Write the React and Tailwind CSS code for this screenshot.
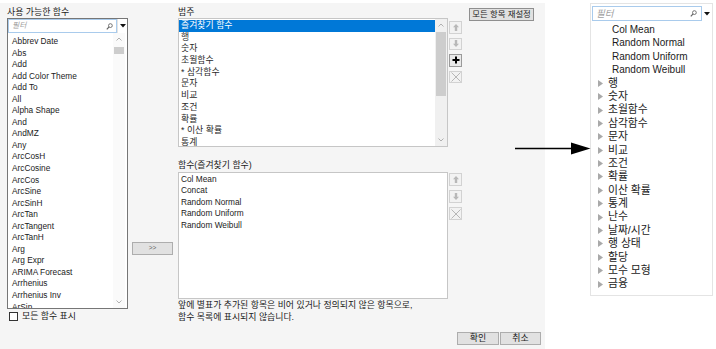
import React from "react";

const F = "font-['Liberation_Sans','Noto_Sans_CJK_KR',sans-serif]";

const funcs = ["Abbrev Date","Abs","Add","Add Color Theme","Add To","All","Alpha Shape","And","AndMZ","Any","ArcCosH","ArcCosine","ArcCos","ArcSine","ArcSinH","ArcTan","ArcTangent","ArcTanH","Arg","Arg Expr","ARIMA Forecast","Arrhenius","Arrhenius Inv","ArSin"];
const cats = ["즐겨찾기 함수","행","숫자","초월함수","* 삼각함수","문자","비교","조건","확률","* 이산 확률","통계"];
const favs = ["Col Mean","Concat","Random Normal","Random Uniform","Random Weibull"];
const panelFuncs = ["Col Mean","Random Normal","Random Uniform","Random Weibull"];
const tree = ["행","숫자","초월함수","삼각함수","문자","비교","조건","확률","이산 확률","통계","난수","날짜/시간","행 상태","할당","모수 모형","금융"];

function SearchIcon() {
  return (
    <svg width="7" height="7" viewBox="0 0 7 7">
      <circle cx="4.4" cy="2.6" r="1.9" fill="none" stroke="#666" strokeWidth="0.9" />
      <line x1="3" y1="4" x2="0.8" y2="6.3" stroke="#666" strokeWidth="1.1" />
    </svg>
  );
}

function DownTri() {
  return (
    <svg width="6" height="4" viewBox="0 0 6 4">
      <polygon points="0,0 6,0 3,3.6" fill="#111" />
    </svg>
  );
}

function Chevron({ up }) {
  return (
    <svg width="6" height="4" viewBox="0 0 6 4">
      <polyline points={up ? "0.5,3.5 3,1 5.5,3.5" : "0.5,0.5 3,3 5.5,0.5"} fill="none" stroke="#a8a8a8" strokeWidth="0.9" />
    </svg>
  );
}

function Scrollbar({ thumbTop, thumbH, track }) {
  return (
    <div className={`w-[12px] flex flex-col ${track}`}>
      <div className="h-[12px] flex items-center justify-center"><Chevron up /></div>
      <div style={{ marginTop: thumbTop }} className="bg-[#cdcdcd] mx-[1px]">
        <div style={{ height: thumbH }} />
      </div>
      <div className="flex-1" />
      <div className="h-[12px] flex items-center justify-center"><Chevron /></div>
    </div>
  );
}

function UpArrow({ down }) {
  return (
    <svg width="6" height="7" viewBox="0 0 6 7" style={down ? { transform: "rotate(180deg)" } : undefined}>
      <path d="M3 0 L6 3.2 H4.2 V7 H1.8 V3.2 H0 Z" fill="#b8b8b8" />
    </svg>
  );
}

function IconBtn({ kind, h }) {
  const strong = kind === "plus";
  return (
    <div className={`w-[13px] ${h} flex items-center justify-center border ${strong ? "border-[#9a9a9a] bg-[#e9e9e9]" : "border-[#d2d2d2] bg-[#f2f2f2]"}`}>
      {kind === "up" && <UpArrow />}
      {kind === "down" && <UpArrow down />}
      {kind === "plus" && (
        <svg width="8" height="8" viewBox="0 0 8 8">
          <path d="M4 0.5 V7.5 M0.5 4 H7.5" stroke="#000" strokeWidth="2" />
        </svg>
      )}
      {kind === "x" && (
        <svg width="10" height="10" viewBox="0 0 10 10">
          <path d="M0.5 0.5 L9.5 9.5 M9.5 0.5 L0.5 9.5" stroke="#b0b0b0" strokeWidth="0.9" />
        </svg>
      )}
    </div>
  );
}

function Tri() {
  return (
    <svg width="5" height="7" viewBox="0 0 5 7">
      <polygon points="0,0 5,3.5 0,7" fill="#a9a9a9" />
    </svg>
  );
}

export default function App() {
  return (
    <div className={`${F} relative w-[716px] h-[349px] bg-white flex text-[#1b1b1b] overflow-hidden`}>
      <div className="mt-[3px] w-[545px] h-[346px] bg-[#f5f5f5] flex flex-col">
        <div className="flex h-[326px]">
          {/* left column */}
          <div className="ml-[7px] w-[121px] flex flex-col">
            <div className="h-[15px] pt-[3px] text-[8.9px] leading-[13px] whitespace-nowrap">사용 가능한 함수</div>
            <div className="h-[291px] border border-[#767676] bg-white flex flex-col">
              <div className="h-[14px] flex">
                <div className="flex-1 border border-[#a9cbec] flex items-center justify-between pl-[3px] pr-[3px]">
                  <span className="italic text-[7.8px] text-[#a0a0a0] leading-none">필터</span>
                  <SearchIcon />
                </div>
                <div className="w-[10px] flex items-center justify-center border-l border-[#e3e3e3]"><DownTri /></div>
              </div>
              <div className="flex-1 flex min-h-0">
                <div className="flex-1 overflow-hidden pt-[3px] pl-[4px] text-[8.3px]">
                  {funcs.map((f) => (
                    <div key={f} className="h-[11.55px] leading-[11.55px] whitespace-nowrap">{f}</div>
                  ))}
                </div>
                <div className="mr-[2px] flex">
                  <Scrollbar thumbTop={2} thumbH={7} track="bg-[#fafafa]" />
                </div>
              </div>
            </div>
            <div className="mt-[2px] ml-[2px] flex items-center gap-[4px]">
              <div className="w-[9px] h-[9px] border border-[#333] bg-white" />
              <span className="text-[8.9px] leading-[11px] whitespace-nowrap">모든 함수 표시</span>
            </div>
          </div>

          {/* >> button */}
          <div className="ml-[4px] w-[41px] pt-[239px]">
            <div className="h-[13px] border border-[#adadad] bg-[#e1e1e1] flex items-center justify-center text-[6.5px] text-[#666] leading-none">&gt;&gt;</div>
          </div>

          {/* middle column */}
          <div className="ml-[5px] w-[284px] flex flex-col">
            <div className="h-[15px] pt-[4px] text-[8.9px] leading-[11px]">범주</div>
            <div className="flex gap-[1px]">
              <div className="w-[270px] h-[129px] border border-[#c6c6c6] bg-white flex">
                <div className="flex-1 pt-[1px] text-[8.9px] overflow-hidden">
                  {cats.map((c, i) => (
                    <div key={c} className={`h-[11.7px] leading-[11.7px] pl-[2px] whitespace-nowrap ${i === 0 ? "bg-[#0078d7] text-white" : "text-[#2a2a2a]"}`}>{c}</div>
                  ))}
                </div>
                <Scrollbar thumbTop={1} thumbH={64} track="bg-[#f0f0f0]" />
              </div>
              <div className="pt-[3px] flex flex-col gap-[4px]">
                <IconBtn kind="up" h="h-[12.5px]" />
                <IconBtn kind="down" h="h-[12.5px]" />
                <IconBtn kind="plus" h="h-[12.5px]" />
                <IconBtn kind="x" h="h-[12.5px]" />
              </div>
            </div>
            <div className="h-[25px] pt-[12px] text-[8.9px] leading-[12px] whitespace-nowrap">함수(즐겨찾기 함수)</div>
            <div className="flex gap-[1px]">
              <div className="w-[270px] h-[127px] border border-[#c6c6c6] bg-white pt-[0.5px] pl-[2px] text-[8.3px]">
                {favs.map((f) => (
                  <div key={f} className="h-[11.5px] leading-[11.5px] whitespace-nowrap">{f}</div>
                ))}
              </div>
              <div className="pt-[1px] flex flex-col gap-[4px]">
                <IconBtn kind="up" h="h-[13px]" />
                <IconBtn kind="down" h="h-[13px]" />
                <IconBtn kind="x" h="h-[13px]" />
              </div>
            </div>
            <div className="pt-[1px] text-[8.9px] leading-[11.5px] whitespace-nowrap">
              <div>앞에 별표가 추가된 항목은 비어 있거나 정의되지 않은 항목으로,</div>
              <div>함수 목록에 표시되지 않습니다.</div>
            </div>
          </div>

          {/* reset */}
          <div className="ml-[7px] pt-[5px]">
            <div className="w-[65px] h-[13px] border border-[#8f8f8f] bg-[#e1e1e1] flex items-center justify-center text-[8.4px] leading-none whitespace-nowrap">모든 항목 재설정</div>
          </div>
        </div>

        <div className="flex justify-end gap-[1px] pr-[4px] pt-[3px]">
          <div className="w-[42px] h-[13px] border border-[#adadad] bg-[#e1e1e1] flex items-center justify-center text-[8.9px] leading-none">확인</div>
          <div className="w-[41px] h-[13px] border border-[#adadad] bg-[#e1e1e1] flex items-center justify-center text-[8.9px] leading-none">취소</div>
        </div>
      </div>

      {/* right panel */}
      <div className="ml-[45px] mt-[3px] w-[123px] h-[293px] border border-[#e4e4e4] bg-white flex flex-col pt-[2px] pl-[1px]">
        <div className="h-[15px] flex">
          <div className="w-[110px] border border-[#a9cbec] flex items-center justify-between pl-[3px] pr-[4px]">
            <span className="italic text-[9.5px] text-[#a0a0a0] leading-none">필터</span>
            <SearchIcon />
          </div>
          <div className="w-[10px] flex items-center justify-center"><DownTri /></div>
        </div>
        <div className="pt-[2px] text-[10px]">
          {panelFuncs.map((f) => (
            <div key={f} className="h-[13.4px] leading-[13.4px] pl-[20px] whitespace-nowrap">{f}</div>
          ))}
          {tree.map((t) => (
            <div key={t} className="h-[13.4px] flex items-center pl-[6px] gap-[5px] whitespace-nowrap">
              <Tri />
              <span className="text-[10.8px] leading-[13.4px]">{t}</span>
            </div>
          ))}
        </div>
      </div>

      {/* arrow */}
      <svg className="absolute left-[515px] top-[142px]" width="76" height="13" viewBox="0 0 76 13">
        <line x1="0" y1="6.5" x2="58" y2="6.5" stroke="#000" strokeWidth="1.3" />
        <polygon points="56,0.5 75.5,6.5 56,12.5" fill="#000" />
      </svg>
    </div>
  );
}
